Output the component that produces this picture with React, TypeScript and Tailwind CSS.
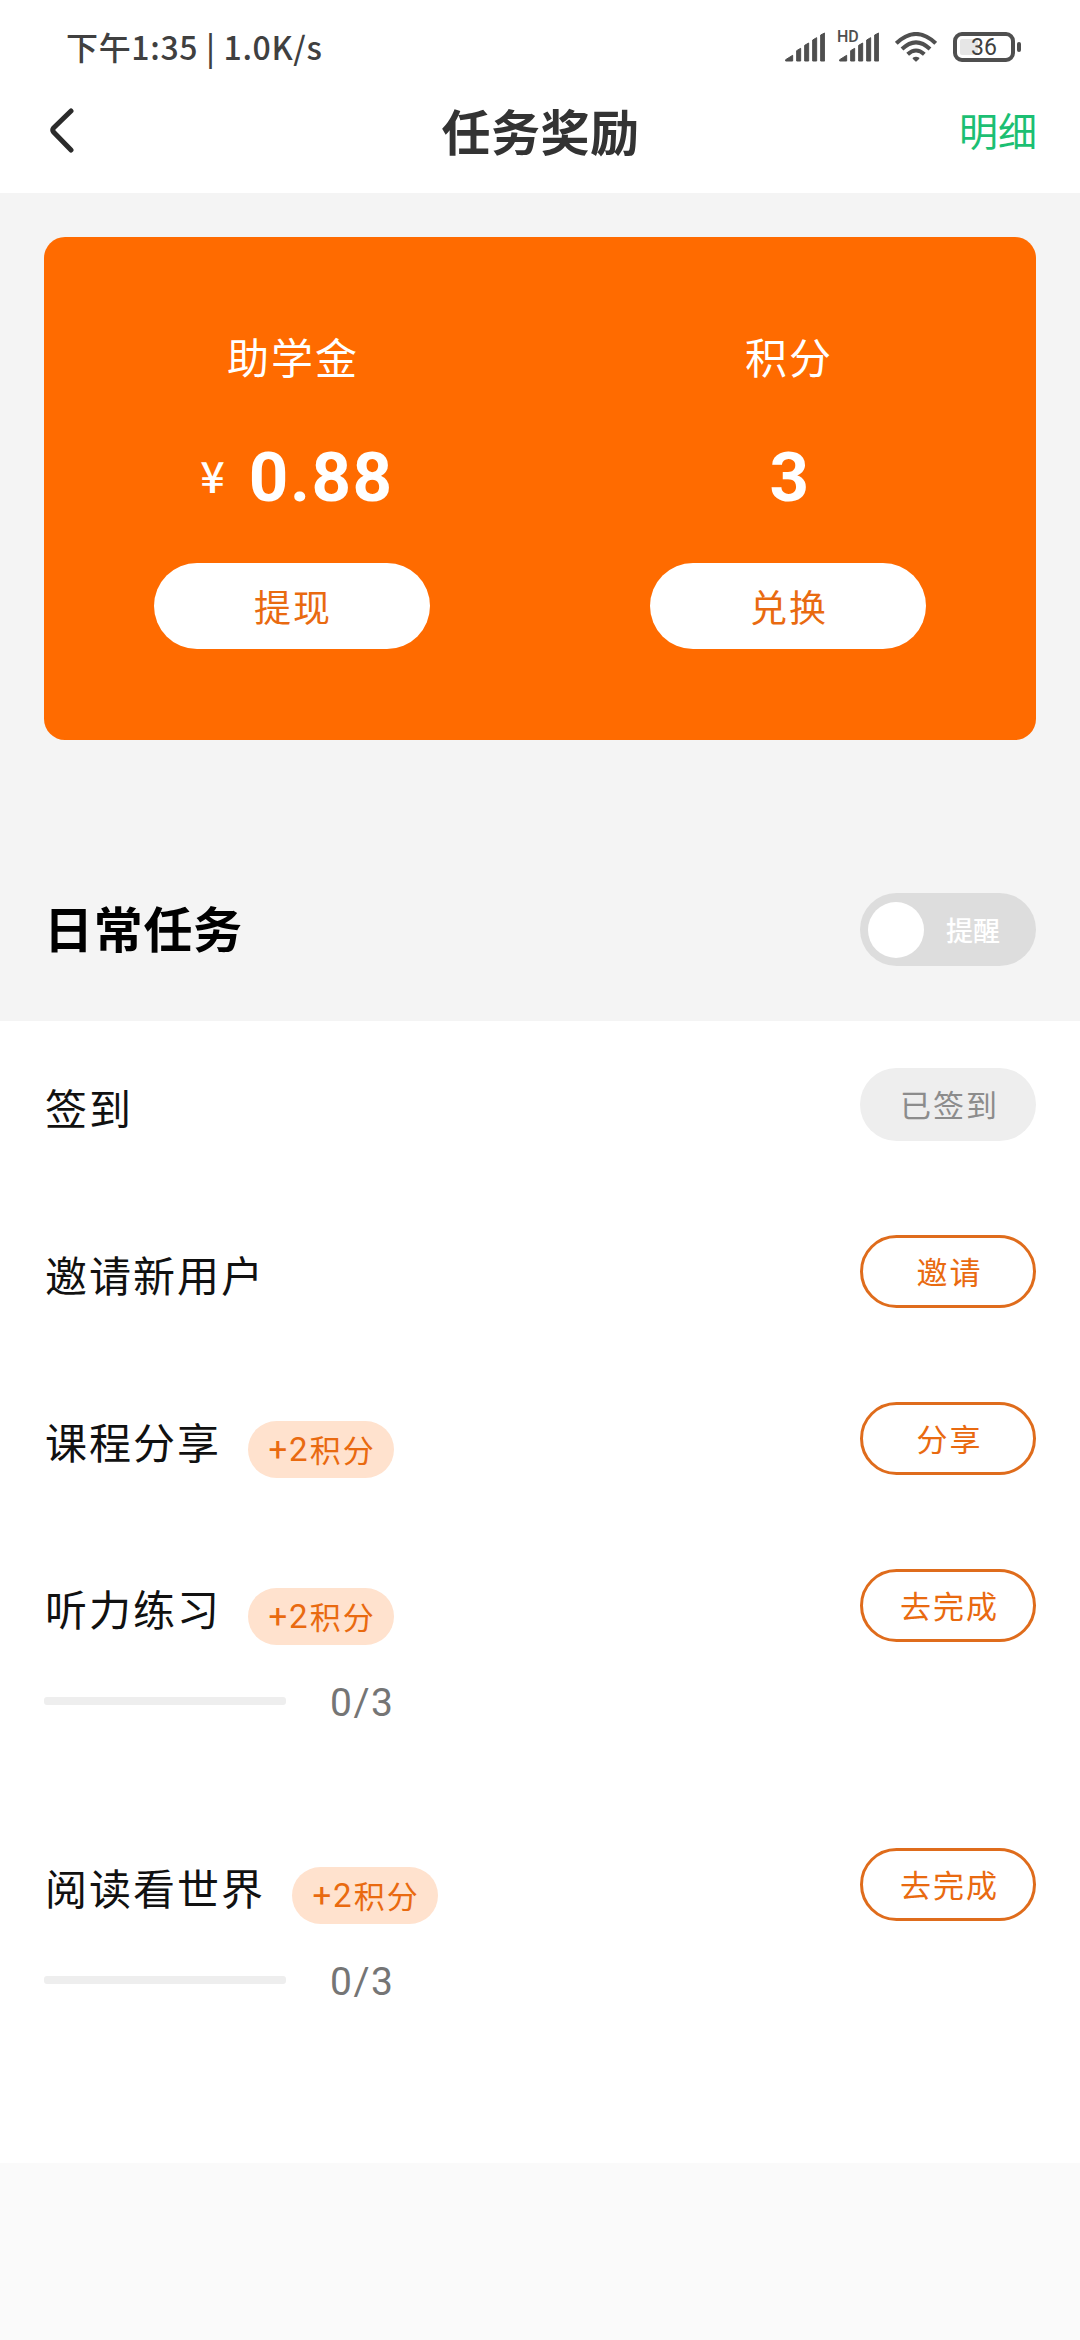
import clsx from "clsx";

type Task = {
  title: string;
  action: string;
  done?: boolean;
  reward?: number;
  progress?: { current: number; total: number };
};

const tasks: Task[] = [
  { title: "签到", action: "已签到", done: true },
  { title: "邀请新用户", action: "邀请" },
  { title: "课程分享", action: "分享", reward: 2 },
  {
    title: "听力练习",
    action: "去完成",
    reward: 2,
    progress: { current: 0, total: 3 },
  },
  {
    title: "阅读看世界",
    action: "去完成",
    reward: 2,
    progress: { current: 0, total: 3 },
  },
];

function SignalIcon() {
  return (
    <svg
      width="40"
      height="30"
      viewBox="0 0 120 90"
      fill="#4f4f4f"
      stroke="#4f4f4f"
      strokeWidth="3"
      strokeLinejoin="round"
    >
      <path d="M2 83 L23 70 V87 H2 Z" />
      <path d="M35 56 L47 49 V87 H35 Z" />
      <path d="M59 40 L71 33 V87 H59 Z" />
      <path d="M83 24 L95 17 V87 H83 Z" />
      <path d="M107 9 L119 3 V87 H107 Z" />
    </svg>
  );
}

function WifiIcon() {
  return (
    <svg
      className="ml-4"
      width="42"
      height="30"
      viewBox="0 0 126 90"
      fill="none"
      stroke="#4f4f4f"
      strokeWidth="12"
    >
      <path d="M4 34 Q63 -22 122 34" />
      <path d="M21 51 Q63 11 105 51" />
      <path d="M38 67 Q63 44 88 67" />
      <path
        d="M56 79 Q63 75 70 79 L63 86 Z"
        fill="#4f4f4f"
        strokeWidth="6"
        strokeLinejoin="round"
      />
    </svg>
  );
}

function BatteryIcon() {
  return (
    <div className="ml-4 flex items-center gap-[2px]">
      <div className="relative flex h-[30px] w-[62px] items-center justify-center rounded-[9px] border-4 border-[#4f4f4f]">
        <div className="absolute left-[3px] top-[3px] h-4 w-[18px] rounded-[2px] bg-[#e6e6e6]" />
        <span className="relative font-['Roboto',sans-serif] text-[23px] leading-none text-[#404040]">
          36
        </span>
      </div>
      <div className="h-[10px] w-1 rounded-[2px] bg-[#4f4f4f]" />
    </div>
  );
}

function StatusBar() {
  return (
    <div className="flex h-[94px] items-center justify-between pl-[66px] pr-[59px]">
      <span className="mb-[3px] text-[32px] font-medium leading-none tracking-[0.65px] text-[#404040]">
        下午1:35 | 1.0K/s
      </span>

      <div className="flex items-center">
        <SignalIcon />
        <div className="relative ml-[14px]">
          <SignalIcon />
          <span className="absolute -left-[2px] -top-[3px] font-['Roboto',sans-serif] text-[16px] font-medium leading-[16px] text-[#4f4f4f]">
            HD
          </span>
        </div>
        <WifiIcon />
        <BatteryIcon />
      </div>
    </div>
  );
}

function Header() {
  return (
    <header className="grid h-[99px] grid-cols-3 items-center pb-[28px] pl-[47px] pr-[43px]">
      <svg width="28" height="46" viewBox="0 0 28 46" fill="none">
        <path
          d="M24 4 L6.5 21 Q5 23 6.5 25 L24 43"
          stroke="#2b2b2b"
          strokeWidth="5"
          strokeLinecap="round"
          strokeLinejoin="round"
        />
      </svg>

      <h1 className="pr-[3px] text-center text-[49px] font-bold leading-none tracking-[0.5px] text-[#333333]">
        任务奖励
      </h1>

      <a className="text-right text-[39px] leading-none text-[#1cbf73]">明细</a>
    </header>
  );
}

function Balance({
  label,
  value,
  unit,
  action,
}: {
  label: string;
  value: string;
  unit?: string;
  action: string;
}) {
  return (
    <div className="flex flex-1 flex-col items-center pt-[89px] text-white">
      <div className="pl-[2px] text-[42px] leading-[60px] tracking-[2px]">{label}</div>

      <div className="mt-[43px] flex h-[90px] items-center pl-[4px] font-bold">
        {unit && (
          <span className="ml-[6px] mr-[24px] text-[43px] font-medium leading-none">
            {unit}
          </span>
        )}
        <span className="pt-[7px] font-['Roboto',sans-serif] text-[69px] leading-none tracking-[1.5px]">
          {value}
        </span>
      </div>

      <button className="mt-[44px] h-[86px] w-[276px] rounded-full bg-white pl-[2px] pt-[2px] text-[37px] tracking-[2px] text-[#e96a10]">
        {action}
      </button>
    </div>
  );
}

function TaskRow({ task }: { task: Task }) {
  return (
    <li className={clsx("px-[44px] pt-[47px]", task.progress ? "h-[279px]" : "h-[167px]")}>
      <div className="flex h-[73px] items-center justify-between">
        <div className="flex items-center">
          <span className="mt-[5px] pl-px text-[42px] leading-none tracking-[2px] text-[#111111]">
            {task.title}
          </span>

          {task.reward && (
            <span className="ml-[27px] mt-[22px] flex h-[57px] w-[146px] items-center justify-center rounded-full bg-[#ffe2ce] pl-[2px] text-[31px] tracking-[2px] text-[#e96a10]">
              <span className="pt-px font-['Roboto',sans-serif] text-[33px]">
                +{task.reward}
              </span>
              积分
            </span>
          )}
        </div>

        <button
          className={clsx(
            "h-[73px] w-[176px] rounded-full pl-[3px] text-[31px] tracking-[2px]",
            task.done
              ? "bg-[#eeeeee] text-[#8c8c8c]"
              : "border-[3px] border-[#df6c1c] text-[#e96a10]"
          )}
        >
          {task.action}
        </button>
      </div>

      {task.progress && (
        <div className="mt-[38px] flex h-[42px] items-center">
          <div className="h-2 w-[242px] overflow-hidden rounded-[3px] bg-[#eeeeee]">
            <div
              className="h-full bg-[#ff6b00]"
              style={{ width: `${(task.progress.current / task.progress.total) * 100}%` }}
            />
          </div>
          <span className="ml-[44px] pt-[4px] font-['Roboto',sans-serif] text-[39px] leading-[38px] tracking-[1.5px] text-[#757575]">
            {task.progress.current}/{task.progress.total}
          </span>
        </div>
      )}
    </li>
  );
}

export default function App() {
  return (
    <div className="flex h-[2340px] w-[1080px] flex-col bg-[#fafafa] font-['Noto_Sans_CJK_SC',sans-serif]">

      <div className="bg-white">
        <StatusBar />
        <Header />
      </div>

      <section className="h-[828px] bg-[#f4f4f4] px-[44px] pt-[44px]">

        <div className="flex h-[503px] rounded-[21px] bg-[#ff6b00]">
          <Balance label="助学金" unit="¥" value="0.88" action="提现" />
          <Balance label="积分" value="3" action="兑换" />
        </div>

        <div className="mt-[153px] flex h-[73px] items-center justify-between">
          <h2 className="mb-[6px] text-[49px] font-bold leading-none tracking-[0.7px] text-black">
            日常任务
          </h2>

          <div className="flex h-[73px] w-[176px] items-center rounded-full bg-[#dddddd] pl-2">
            <div className="h-14 w-14 rounded-full bg-white" />
            <span className="ml-[22px] text-[27px] font-medium leading-none text-white">
              提醒
            </span>
          </div>
        </div>

      </section>

      <ul className="h-[1142px] bg-white">
        {tasks.map((task) => (
          <TaskRow key={task.title} task={task} />
        ))}
      </ul>

    </div>
  );
}
